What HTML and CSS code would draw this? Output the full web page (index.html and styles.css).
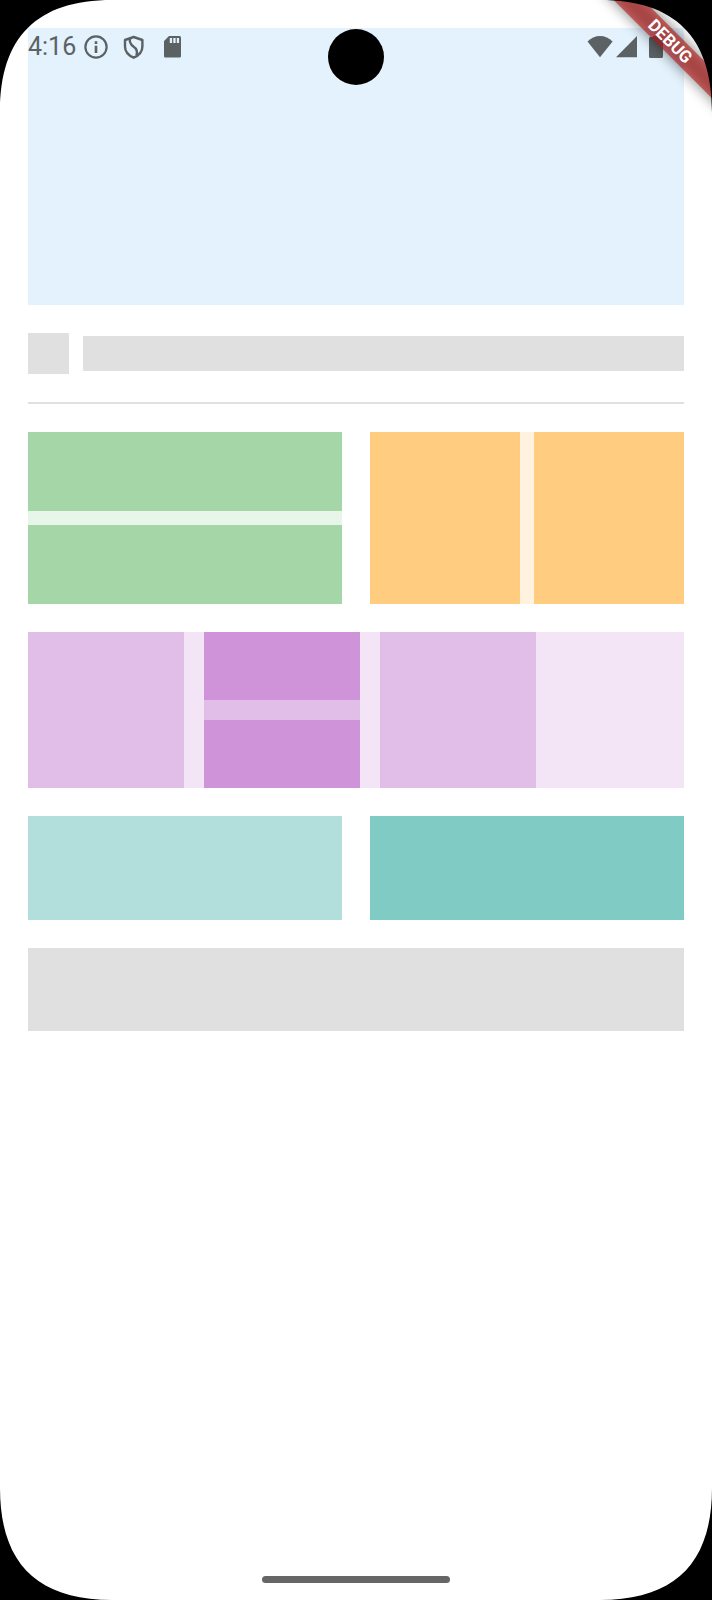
FILE: index.html
```html
<!DOCTYPE html>
<html lang="en">
<head>
<meta charset="utf-8">
<meta name="viewport" content="width=device-width, initial-scale=1">
<title>Layout</title>
<link rel="stylesheet" href="styles.css">
</head>
<body>
<div class="screen">
  <header class="status-bar">
    <span class="clock">4:16</span>
    <div class="notifications">
      <svg class="icon" viewBox="0 0 24 24"><circle cx="12" cy="12" r="10.600" fill="none" stroke="currentColor" stroke-width="2.200"/><path d="M10.700 10.800h2.600v7.200h-2.600zM10.700 6.200h2.600v2.800h-2.600z" fill="currentColor"/></svg>
      <svg class="icon" viewBox="0 0 24 24"><path d="M11.700 2 3 5v6.500c0 5.200 3.600 9 8.700 11.200 5.100-2.200 8.700-6 8.700-11.200V5z" fill="none" stroke="currentColor" stroke-width="2.400" stroke-linejoin="round"/><path d="M8 3.300c-.8 4.200.4 6.100 3.400 8.200 3.300 2.200 4.500 4.700 3 9" fill="none" stroke="currentColor" stroke-width="2.400"/></svg>
      <svg class="icon" viewBox="0 0 24 24"><path fill="currentColor" fill-rule="evenodd" d="M9 1h10.300c1 0 1.700.7 1.700 1.700v18.200c0 1-.7 1.700-1.700 1.700H5.700C4.700 22.600 4 21.900 4 20.900V6zM9.800 3v5h2.300V3zm3.500 0v5h2.300V3zm3.500 0v5h2.300V3z"/></svg>
    </div>
    <div class="system">
      <svg class="icon icon-wifi" viewBox="0 0 26 24"><path fill="currentColor" d="M13 22.300.5 6.600C4 3 8.300 1 13 1s9.200 2 12.600 5.600z"/></svg>
      <svg class="icon icon-signal" viewBox="0 0 21 24"><path fill="currentColor" d="M21 1v21.300H0z"/></svg>
      <svg class="icon icon-battery" viewBox="0 0 23 24"><path fill="currentColor" d="M13 1h6v1h2.500c1 0 1.500.6 1.500 1.500v18c0 .9-.6 1.500-1.500 1.500h-11c-.9 0-1.500-.6-1.500-1.500v-18C9 2.600 9.600 2 10.500 2H13z"/></svg>
    </div>
  </header>
  <div class="camera"></div>

  <main class="content">
    <div class="hero"></div>
    <div class="title-row">
      <div class="avatar"></div>
      <div class="title"></div>
    </div>
    <hr class="divider">
    <div class="pair">
      <div class="green-panel"><div class="green"></div><div class="green"></div></div>
      <div class="orange-panel"><div class="orange"></div><div class="orange"></div></div>
    </div>
    <div class="purple-panel">
      <div class="purple"></div>
      <div class="purple purple-stack"><div class="purple-dark"></div><div class="purple-dark"></div></div>
      <div class="purple"></div>
    </div>
    <div class="pair">
      <div class="teal"></div>
      <div class="teal teal-dark"></div>
    </div>
    <div class="footer"></div>
  </main>

  <div class="home-indicator"></div>
  <div class="banner-shadow"></div>
  <div class="banner">DEBUG</div>

  <svg class="corner top left" viewBox="0 0 112 112"><path d="M0 0H112C37 0 0 37 0 112z"/></svg>
  <svg class="corner top right" viewBox="0 0 112 112"><path d="M112 0V112C112 37 75 0 0 0z"/></svg>
  <svg class="corner bottom left" viewBox="0 0 112 112"><path d="M0 112V0C0 75 37 112 112 112z"/></svg>
  <svg class="corner bottom right" viewBox="0 0 112 112"><path d="M112 112H0C75 112 112 75 112 0z"/></svg>
</div>
</body>
</html>
```
FILE: styles.css
```css
* { box-sizing: border-box; }

body {
  margin: 0;
  background: #000;
  font-family: Roboto, sans-serif;
}

.screen {
  position: relative;
  display: flex;
  flex-direction: column;
  min-height: 100vh;
  padding: 28px 28px 17px;
  overflow: hidden;
  background: #fff;
}

.status-bar {
  position: absolute;
  top: 32px;
  left: 0;
  right: 0;
  display: flex;
  align-items: center;
  gap: 8px;
  height: 30px;
  padding: 0 49px 0 28px;
  color: #5c6164;
}

.clock { font-size: 25px; line-height: 30px; }
.notifications { display: flex; gap: 14px; }
.system { display: flex; gap: 3px; margin-left: auto; }
.icon { display: block; width: 24px; height: 24px; }
.icon-wifi { width: 26px; }
.icon-signal { width: 21px; }
.icon-battery { width: 23px; }

.camera {
  position: absolute;
  top: 29px;
  left: calc(50% - 28px);
  width: 56px;
  height: 56px;
  border-radius: 50%;
  background: #000;
}

.content {
  display: flex;
  flex-direction: column;
  gap: 28px;
}

.hero { height: 277px; background: #e3f2fd; }

.title-row { display: flex; align-items: center; gap: 14px; }
.avatar { width: 41px; height: 41px; background: #e0e0e0; }
.title { flex: 1; height: 35px; background: #e0e0e0; }

.divider { width: 100%; height: 2px; margin: 0; border: 0; background: #e0e0e0; }

.pair { display: grid; grid-template-columns: 1fr 1fr; gap: 28px; }

.green-panel,
.orange-panel { display: grid; gap: 14px; height: 172px; }
.green-panel { background: #e8f5e9; }
.green { background: #a5d6a7; }
.orange-panel { grid-template-columns: 1fr 1fr; background: #fff3e0; }
.orange { background: #ffcc80; }

.purple-panel {
  display: flex;
  gap: 20px;
  height: 156px;
  background: #f3e5f5;
}
.purple { width: 156px; background: #e1bee7; }
.purple-stack { display: grid; gap: 20px; }
.purple-dark { background: #ce93d8; }

.teal { height: 104px; background: #b2dfdb; }
.teal-dark { background: #80cbc4; }

.footer { height: 83px; background: #e0e0e0; }

.home-indicator {
  width: 188px;
  height: 7px;
  margin: auto auto 0;
  border-radius: 4px;
  background: #666;
}

.banner,
.banner-shadow {
  position: absolute;
  top: 31px;
  right: -56px;
  width: 196px;
  height: 21px;
  transform: rotate(45deg);
}
.banner-shadow {
  background: rgba(0, 0, 0, 0.5);
  filter: blur(7px);
}
.banner {
  background: rgba(183, 28, 28, 0.63);
  color: #fff;
  font-size: 17px;
  font-weight: 700;
  line-height: 21px;
  text-align: center;
}

.corner {
  position: absolute;
  width: 112px;
  height: 112px;
  fill: #000;
}
.top { top: 0; }
.bottom { bottom: 0; }
.left { left: 0; }
.right { right: 0; }
```
